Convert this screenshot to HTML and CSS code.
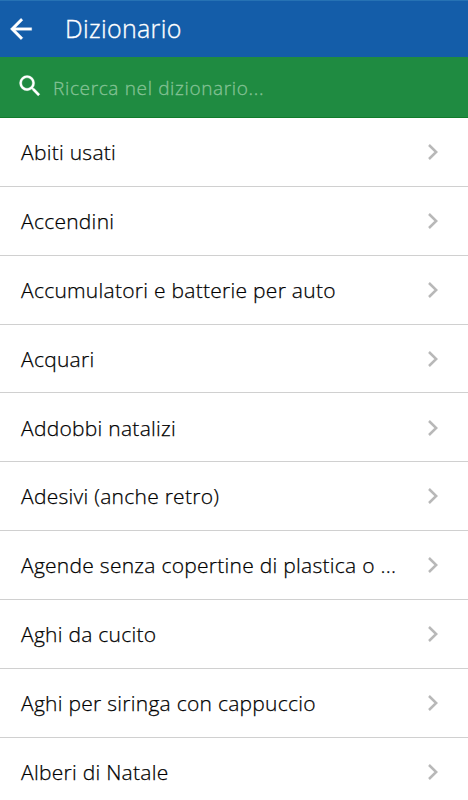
FILE: index.html
```html
<!DOCTYPE html>
<html lang="it">
<head>
<meta charset="utf-8">
<title>Dizionario</title>
<link rel="stylesheet" href="styles.css">
</head>
<body>
<header class="bar">
<svg class="back" viewBox="0 0 24 24" width="32" height="32"><path d="M20 11H7.83l5.59-5.59L12 4l-8 8 8 8 1.41-1.41L7.83 13H20v-2z"/></svg>
<h1 class="title">Dizionario</h1>
</header>
<div class="search">
<svg class="lens" viewBox="0 0 24 24" width="28" height="28"><path d="M15.5 14h-.79l-.28-.27A6.471 6.471 0 0 0 16 9.5 6.5 6.5 0 1 0 9.5 16c1.61 0 3.09-.59 4.23-1.57l.27.28v.79l5 4.99L20.49 19l-4.99-5zm-6 0C7.01 14 5 11.99 5 9.5S7.01 5 9.5 5 14 7.01 14 9.5 11.99 14 9.5 14z"/></svg>
<span class="hint">Ricerca nel dizionario...</span>
</div>
<ul class="list">
<li class="row"><span class="label">Abiti usati</span><svg class="chev" viewBox="0 0 12 18"><path d="M2 2l7.2 7L2 16"/></svg></li>
<li class="row"><span class="label">Accendini</span><svg class="chev" viewBox="0 0 12 18"><path d="M2 2l7.2 7L2 16"/></svg></li>
<li class="row"><span class="label">Accumulatori e batterie per auto</span><svg class="chev" viewBox="0 0 12 18"><path d="M2 2l7.2 7L2 16"/></svg></li>
<li class="row"><span class="label">Acquari</span><svg class="chev" viewBox="0 0 12 18"><path d="M2 2l7.2 7L2 16"/></svg></li>
<li class="row"><span class="label">Addobbi natalizi</span><svg class="chev" viewBox="0 0 12 18"><path d="M2 2l7.2 7L2 16"/></svg></li>
<li class="row"><span class="label">Adesivi (anche retro)</span><svg class="chev" viewBox="0 0 12 18"><path d="M2 2l7.2 7L2 16"/></svg></li>
<li class="row"><span class="label">Agende senza copertine di plastica o ...</span><svg class="chev" viewBox="0 0 12 18"><path d="M2 2l7.2 7L2 16"/></svg></li>
<li class="row"><span class="label">Aghi da cucito</span><svg class="chev" viewBox="0 0 12 18"><path d="M2 2l7.2 7L2 16"/></svg></li>
<li class="row"><span class="label">Aghi per siringa con cappuccio</span><svg class="chev" viewBox="0 0 12 18"><path d="M2 2l7.2 7L2 16"/></svg></li>
<li class="row"><span class="label">Alberi di Natale</span><svg class="chev" viewBox="0 0 12 18"><path d="M2 2l7.2 7L2 16"/></svg></li>
</ul>
</body>
</html>
```
FILE: styles.css
```css
* { box-sizing: border-box; }
body {
  margin: 0;
  height: 800px;
  overflow: hidden;
  background: #fff;
  color: #000;
  font-family: "Open Sans", sans-serif;
}
.bar {
  display: flex;
  align-items: center;
  height: 57px;
  padding-left: 5px;
  border-top: 1px solid #2672b4;
  background: #145da9;
  color: #fff;
}
.back, .lens {
  flex: none;
  fill: #fff;
  stroke: #fff;
  stroke-width: 0.25;
}
.back { margin-top: -1px; }
.title {
  margin: -2px 0 0 28px;
  font-size: 25px;
  font-weight: 300;
  line-height: 34px;
  letter-spacing: 0.35px;
  -webkit-text-stroke: 0.35px currentColor;
}
.search {
  display: flex;
  align-items: center;
  height: 61px;
  padding: 0 0 2px 16px;
  border-bottom: 1px solid #117c2b;
  background: #1f8b41;
}
.hint {
  margin-left: 9px;
  padding-top: 3px;
  color: #84c295;
  font-size: 19px;
  font-weight: 300;
  letter-spacing: 0.65px;
  -webkit-text-stroke: 0.3px currentColor;
}
.list {
  margin: 0;
  padding: 0;
  list-style: none;
}
.row {
  display: flex;
  align-items: center;
  justify-content: space-between;
  height: 68.85px;
  padding: 0.6px 29px 0 21px;
  border-bottom: 1px solid #d0d0d0;
}
.label {
  font-size: 21px;
  font-weight: 300;
  line-height: 28px;
  letter-spacing: 0.27px;
  white-space: nowrap;
  -webkit-text-stroke: 0.25px currentColor;
}
.chev {
  width: 12px;
  height: 18px;
  fill: none;
  stroke: #b8b8b8;
  stroke-width: 2.5;
}
```
